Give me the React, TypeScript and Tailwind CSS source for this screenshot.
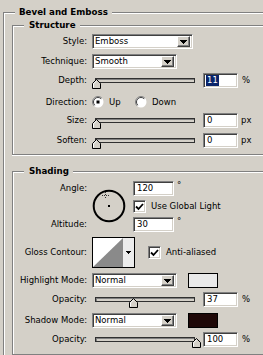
import type { ReactNode } from 'react';

const SUNKEN =
    'border border-t-[#808080] border-l-[#808080] border-b-white border-r-white shadow-[inset_1px_1px_0_#404040,inset_-1px_-1px_0_#d4d0c8]';

const Title = ({ children, className = '' }: { children: ReactNode; className?: string }) => (
    <div className={`-mt-[8px] w-fit bg-[#d4d0c8] text-[8.7px] font-bold leading-[14px] ${className}`}>{children}</div>
);

const GroupBox = ({ title, className = '', children }: { title: string; className?: string; children: ReactNode }) => (
    <div className={`border-l border-t border-b border-[#808080] shadow-[inset_1px_1px_0_#fff,0_1px_0_#fff] ${className}`}>
        <Title className="ml-[11px] pl-[5px] pr-[4px]">{title}</Title>
        {children}
    </div>
);

const Row = ({ label, className = '', children }: { label: string; className?: string; children: ReactNode }) => (
    <div className={`flex items-center ${className}`}>
        <div className="w-[74px] text-right leading-none">{label}</div>
        <div className="ml-[5px] flex items-center">{children}</div>
    </div>
);

const Arrow = () => (
    <svg width="7" height="4" shapeRendering="crispEdges">
        <path d="M0 0h7v1H0zM1 1h5v1H1zM2 2h3v1H2zM3 3h1v1H3z" fill="#000" />
    </svg>
);

const Select = ({ value, className = '' }: { value: string; className?: string }) => (
    <div className={`flex h-[15px] items-center bg-white ${SUNKEN} ${className}`}>
        <span className="flex-1 pl-[2px] leading-none">{value}</span>
        <span className="mr-[2px] flex h-[11px] w-[13px] items-center justify-center border border-t-white border-l-white border-b-[#404040] border-r-[#404040] bg-[#d4d0c8] shadow-[inset_-1px_-1px_0_#808080]">
            <Arrow />
        </span>
    </div>
);

const Field = ({ value, selected = false, className = '' }: { value: string; selected?: boolean; className?: string }) => (
    <div className={`flex h-[15px] w-[35px] items-center bg-white pl-[2px] ${SUNKEN} ${className}`}>
        {selected ? (
            <span className="bg-[#0a246a] px-[1px] leading-[11px] text-white">{value}</span>
        ) : (
            <span className="pl-[1px] leading-none">{value}</span>
        )}
    </div>
);

const Slider = ({ value }: { value: number }) => (
    <div className="relative h-[15px] w-[107px]">
        <div className="ml-[3px] mt-[5px] h-[5px] w-[100px] border border-[#303030] bg-[#d4d0c8] shadow-[inset_1px_1px_0_#808080]" />
        <svg className="absolute top-[6px]" style={{ left: Math.round(value * 0.995) }} width="9" height="10">
            <polygon points="0.5,9.5 0.5,4.5 4.5,0.5 8.5,4.5 8.5,9.5" fill="#d4d0c8" stroke="#000" />
            <polyline points="1.5,8.5 1.5,4.9 4.5,1.9" fill="none" stroke="#fff" />
        </svg>
    </div>
);

const Radio = ({ checked = false }: { checked?: boolean }) => (
    <svg width="12" height="12" viewBox="0 0 12 12">
        <circle cx="6" cy="6" r="5.5" fill="#fff" />
        <path d="M2.1 9.9 A5.5 5.5 0 0 1 9.9 2.1" fill="none" stroke="#808080" />
        <path d="M2.8 9.2 A4.5 4.5 0 0 1 9.2 2.8" fill="none" stroke="#404040" />
        {checked && <rect x="4.5" y="4.5" width="3" height="3" fill="#000" />}
    </svg>
);

const Checkbox = () => (
    <div className={`flex h-[13px] w-[13px] items-center justify-center bg-white ${SUNKEN}`}>
        <svg width="9" height="8">
            <path d="M1 3.5 L3.5 6 L8 1" fill="none" stroke="#000" strokeWidth="1.8" />
        </svg>
    </div>
);

const Deg = () => <span className="ml-[3px] self-start leading-none">°</span>;

const Dial = () => (
    <svg width="34" height="34" className="ml-[5px] mt-[8px] shrink-0" shapeRendering="crispEdges">
        <circle cx="17" cy="17" r="15.3" fill="none" stroke="#000" strokeWidth="2" shapeRendering="auto" />
        <rect x="16" y="16" width="2" height="2" fill="#000" />
        <rect x="13" y="3" width="1" height="1" fill="#333" />
        <rect x="13" y="5" width="1" height="1" fill="#333" />
        <rect x="13" y="8" width="1" height="1" fill="#333" />
        <rect x="10" y="6" width="1" height="1" fill="#333" />
        <rect x="12" y="6" width="1" height="1" fill="#333" />
        <rect x="14" y="6" width="1" height="1" fill="#333" />
        <rect x="16" y="6" width="1" height="1" fill="#333" />
    </svg>
);

const Contour = () => (
    <svg width="43" height="31" shapeRendering="crispEdges">
        <rect x="0.5" y="0.5" width="42" height="30" fill="#ececec" stroke="#000" />
        <rect x="1" y="1" width="30" height="29" fill="#fff" />
        <polygon points="1,30 31,1 31,30" fill="#8a8a8a" shapeRendering="auto" />
        <path d="M34 14h5v1h-5zM35 15h3v1h-3zM36 16h1v1h-1z" fill="#000" />
    </svg>
);

export default function App() {
    return (
        <div className="h-[355px] w-[263px] overflow-hidden bg-[#d4d0c8] pl-[3px] pt-[12px] font-['DejaVu_Sans',sans-serif] text-[8.5px] text-black">
            <div className="h-[400px] w-[300px] border-l border-t border-[#808080] shadow-[inset_1px_1px_0_#fff]">
                <Title className="ml-[11px] pl-[4px] pr-[4px]">Bevel and Emboss</Title>

                <GroupBox title="Structure" className="ml-[8px] mt-[6px] pb-[6px]">
                    <Row label="Style:" className="mt-[2px]">
                        <Select value="Emboss" className="w-[101px]" />
                    </Row>
                    <Row label="Technique:" className="mt-[5px]">
                        <Select value="Smooth" className="w-[85px]" />
                    </Row>
                    <Row label="Depth:" className="mt-[4px]">
                        <Slider value={0} />
                        <Field value="11" selected className="ml-[4px]" />
                        <span className="ml-[4px] leading-none">%</span>
                    </Row>
                    <Row label="Direction:" className="mt-[8px]">
                        <div className="flex w-[43px] items-center">
                            <Radio checked />
                            <span className="ml-[5px] leading-none">Up</span>
                        </div>
                        <Radio />
                        <span className="ml-[5px] leading-none">Down</span>
                    </Row>
                    <Row label="Size:" className="mt-[5px]">
                        <Slider value={0} />
                        <Field value="0" className="ml-[4px]" />
                        <span className="ml-[3px] leading-none">px</span>
                    </Row>
                    <Row label="Soften:" className="mt-[5px]">
                        <Slider value={0} />
                        <Field value="0" className="ml-[4px]" />
                        <span className="ml-[3px] leading-none">px</span>
                    </Row>
                </GroupBox>

                <GroupBox title="Shading" className="ml-[8px] mt-[16px] pb-[7px]">
                    <div className="mt-[3px] flex items-start">
                        <div className="flex h-[51px] w-[74px] flex-col justify-between text-right">
                            <div className="flex h-[15px] items-center justify-end leading-none">Angle:</div>
                            <div className="flex h-[15px] items-center justify-end leading-none">Altitude:</div>
                        </div>
                        <Dial />
                        <div className="ml-[7px] flex flex-col gap-[4px]">
                            <div className="flex">
                                <Field value="120" className="w-[41px]" />
                                <Deg />
                            </div>
                            <div className="flex items-center">
                                <Checkbox />
                                <span className="ml-[5px] leading-none">Use Global Light</span>
                            </div>
                            <div className="flex">
                                <Field value="30" className="w-[41px]" />
                                <Deg />
                            </div>
                        </div>
                    </div>
                    <Row label="Gloss Contour:" className="mt-[5px]">
                        <Contour />
                        <div className="ml-[13px]">
                            <Checkbox />
                        </div>
                        <span className="ml-[5px] leading-none">Anti-aliased</span>
                    </Row>
                    <Row label="Highlight Mode:" className="mt-[5px]">
                        <Select value="Normal" className="w-[85px]" />
                        <div className="ml-[11px] h-[15px] w-[30px] border border-black bg-[#e9e9e9]" />
                    </Row>
                    <Row label="Opacity:" className="mt-[4px]">
                        <Slider value={37} />
                        <Field value="37" className="ml-[4px]" />
                        <span className="ml-[4px] leading-none">%</span>
                    </Row>
                    <Row label="Shadow Mode:" className="mt-[6px]">
                        <Select value="Normal" className="w-[85px]" />
                        <div className="ml-[11px] h-[15px] w-[30px] border border-black bg-[#1e0707]" />
                    </Row>
                    <Row label="Opacity:" className="mt-[4px]">
                        <Slider value={100} />
                        <Field value="100" className="ml-[4px]" />
                        <span className="ml-[4px] leading-none">%</span>
                    </Row>
                </GroupBox>
            </div>
        </div>
    );
}
